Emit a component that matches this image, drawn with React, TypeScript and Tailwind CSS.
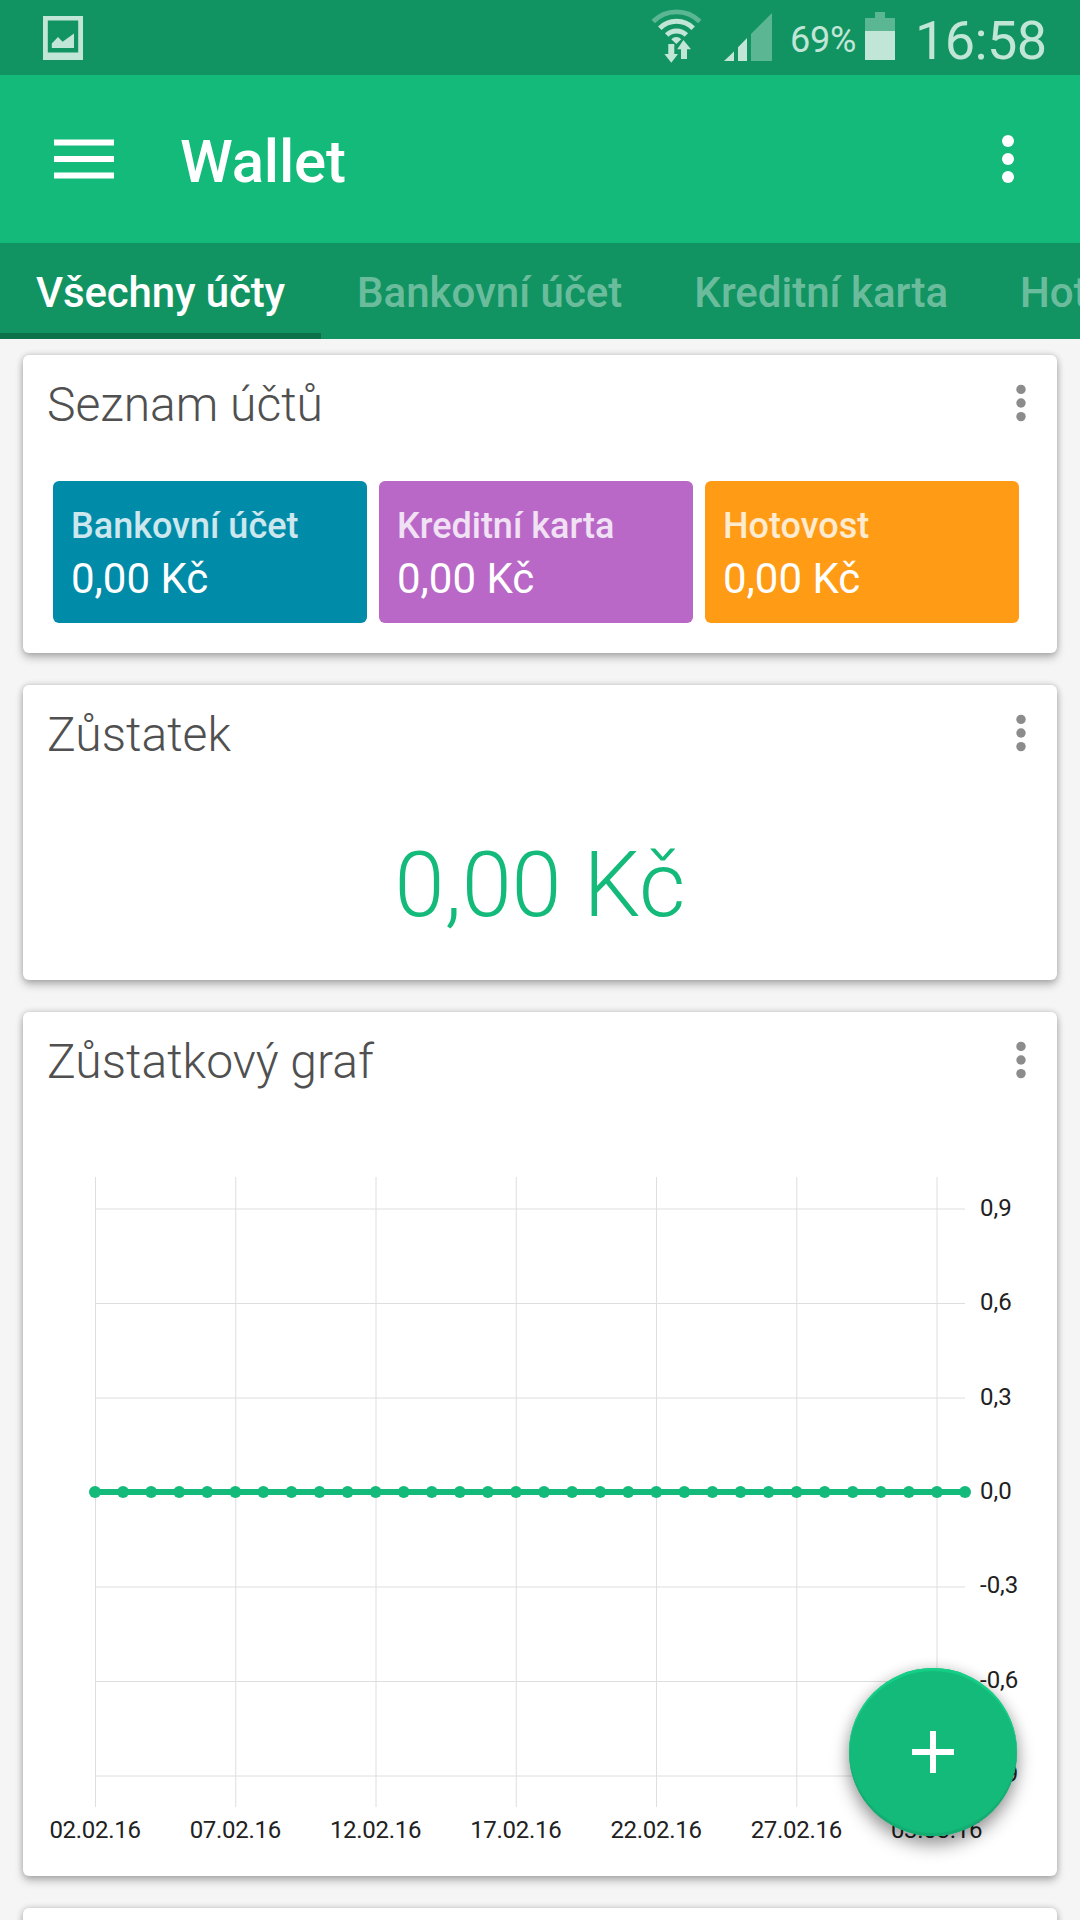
import type { ReactNode } from 'react';

const tabs = ['Všechny účty', 'Bankovní účet', 'Kreditní karta', 'Hotovost'];

const accounts = [
  { name: 'Bankovní účet', amount: '0,00 Kč', color: 'bg-[#008ba9]' },
  { name: 'Kreditní karta', amount: '0,00 Kč', color: 'bg-[#b968c7]' },
  { name: 'Hotovost', amount: '0,00 Kč', color: 'bg-[#ff9b14]' },
];

const dates = ['02.02.16', '07.02.16', '12.02.16', '17.02.16', '22.02.16', '27.02.16', '03.03.16'];
const levels = ['0,9', '0,6', '0,3', '0,0', '-0,3', '-0,6', '-0,9'];
const DAYS = 31;

const StatusBar = () => (
  <div className="flex h-[75px] items-start bg-[#119462] text-[#c1e5d7]">
    <svg className="ml-[43px] mt-4 h-11 w-10" viewBox="0 0 40 44" fill="currentColor">
      <path fillRule="evenodd" d="M0 0h40v44H0zM4.8 4.4v32h30.4v-32z" />
      <path d="M8.8 32v-4.6L15 21l4.6 4.8L31 17.6V32z" />
    </svg>

    {/* wifi */}
    <svg className="ml-[568px] mt-2 h-14 w-[51px]" viewBox="0 0 51 56" fill="none" stroke="currentColor">
      <path d="M2.2 13.5a33 33 0 0 1 46.6 0" strokeWidth="4.8" opacity="0.42" />
      <path d="M8.8 20.2a23.6 23.6 0 0 1 33.4 0" strokeWidth="5" />
      <path d="M15.7 27a14 14 0 0 1 19.6 0" strokeWidth="5" />
      <path d="M25.3 36l-5-4.8a7 7 0 0 1 10 0z" fill="currentColor" stroke="none" />
      <path d="M17.3 36h6v10H27l-6.7 8.8-6.9-8.8h3.9zM30 51V41.2h-3.8l6.2-9.2 7.6 9.2h-4V51z" fill="currentColor" stroke="none" />
    </svg>

    {/* mobile signal */}
    <svg className="ml-[22px] mt-[13px] h-12 w-12" viewBox="0 0 48 48" fill="currentColor">
      <path d="M0 48l10-9.5V48zM14 48V34.2l9-9.2v23z" />
      <path d="M27 48V21L48 0v48z" opacity="0.42" />
    </svg>

    <span className="ml-[18px] mt-[19px] w-[66px] whitespace-nowrap text-[36px] leading-[42px] tracking-[-0.2px]">69%</span>
    <svg className="ml-[9px] mt-3 h-12 w-[30px]" viewBox="0 0 30 48" fill="currentColor">
      <path d="M10 0h10v6h10v13H0V6h10z" opacity="0.42" />
      <path d="M0 19h30v29H0z" />
    </svg>
    <span className="ml-[20px] mt-[9px] whitespace-nowrap text-[54px] leading-[64px] tracking-[-0.6px]">16:58</span>
  </div>
);

const Toolbar = () => (
  <header className="flex h-[168px] items-center bg-[#14ba7a] text-white">
    <svg className="ml-[54px] h-10 w-15" viewBox="0 0 60 40" fill="currentColor">
      <path d="M0 .4h60v6H0zM0 17h60v6H0zM0 33.4h60v6H0z" />
    </svg>
    <h1 className="ml-[66px] flex-1 pt-[5px] text-[60px] font-medium leading-[72px] tracking-[-0.2px]">Wallet</h1>
    <svg className="mr-[66px] h-12 w-3" viewBox="0 0 12 48" fill="currentColor">
      <circle cx="6" cy="6" r="6" />
      <circle cx="6" cy="24" r="6" />
      <circle cx="6" cy="42" r="6" />
    </svg>
  </header>
);

const TabBar = () => (
  <nav className="flex h-24 overflow-hidden bg-[#119462]">
    {tabs.map((tab, i) => (
      <div
        key={tab}
        className={
          i === 0
            ? 'flex w-[321px] shrink-0 border-b-6 border-[#0c7049] px-9 pt-[9px] tracking-[-0.15px] text-white'
            : 'flex shrink-0 border-b-6 border-transparent px-9 pt-[9px] text-white/40'
        }
      >
        <span className="whitespace-nowrap text-[42px] font-medium leading-[81px]">{tab}</span>
      </div>
    ))}
  </nav>
);

const Card = ({ title, className = '', children }: { title?: string; className?: string; children?: ReactNode }) => (
  <section
    className={`shrink-0 rounded-md bg-white shadow-[0_5px_8px_rgba(0,0,0,0.24),0_0_6px_rgba(0,0,0,0.2)] ${className}`}
  >
    {title && (
      <div className="flex h-24 items-center justify-between pl-6 pr-[31px]">
        <h2 className="pt-[3px] text-[48px] font-light leading-[58px] text-[#505050]">{title}</h2>
        <svg className="h-[38px] w-[10px]" viewBox="0 0 10 38" fill="#8c8c8c">
          <circle cx="5" cy="5.4" r="4.7" />
          <circle cx="5" cy="19" r="4.7" />
          <circle cx="5" cy="32.6" r="4.7" />
        </svg>
      </div>
    )}
    {children}
  </section>
);

const BalanceChart = () => (
  <svg className="block h-[768px] w-[1034px] text-[24px]" viewBox="23 1108 1034 768" fill="#212121">
    <g stroke="#dedede" strokeWidth="1">
      {dates.map((d, i) => (
        <line key={d} x1={95.5 + i * 140.25} x2={95.5 + i * 140.25} y1="1177" y2="1807" />
      ))}
      {levels.map((l, i) => (
        <line key={l} x1="95" x2="965" y1={1209 + i * 94.5} y2={1209 + i * 94.5} />
      ))}
    </g>
    <g className="tracking-[-0.3px]">
      {dates.map((d, i) => (
        <text key={d} x={95 + i * 140.25} y="1838" textAnchor="middle">
          {d}
        </text>
      ))}
    </g>
    {levels.map((l, i) => (
      <text key={l} x="980" y={1216 + i * 94.35}>
        {l}
      </text>
    ))}
    <g fill="#14ba7a">
      <rect x="95" y="1489" width="870" height="6" />
      {Array.from({ length: DAYS + 1 }, (_, i) => (
        <circle key={i} cx={95 + (i * 870) / DAYS} cy="1492" r="6" />
      ))}
    </g>
  </svg>
);

const AddButton = () => (
  <button className="absolute bottom-[84px] right-[63px] flex h-[168px] w-[168px] items-center justify-center rounded-full bg-[#14ba7a] shadow-[0_9px_18px_rgba(0,0,0,0.38),0_0_14px_rgba(0,0,0,0.12),inset_0_3px_1px_#15cf87,inset_0_-3px_1px_#13ac71]">
    <svg className="h-[42px] w-[42px]" viewBox="0 0 42 42" fill="white">
      <path d="M18 0h6v18h18v6H24v18h-6V24H0v-6h18z" />
    </svg>
  </button>
);

export default function App() {
  return (
    <div className="relative flex h-[1920px] w-[1080px] flex-col overflow-hidden bg-[#f5f5f5] font-['Roboto',sans-serif]">
      <StatusBar />
      <Toolbar />
      <TabBar />

      <main className="flex flex-1 flex-col gap-8 overflow-hidden px-[23px] pt-4">
        <Card title="Seznam účtů" className="h-[298px]">
          <div className="flex gap-3 pl-[30px] pt-[30px]">
            {accounts.map(({ name, amount, color }) => (
              <div key={name} className={`h-[142px] w-[314px] rounded-md px-[18px] pt-[18px] text-white ${color}`}>
                <p className="text-[36px] font-medium leading-[54px] text-white/80">{name}</p>
                <p className="text-[42px] leading-[52px]">{amount}</p>
              </div>
            ))}
          </div>
        </Card>

        <Card title="Zůstatek" className="h-[295px]">
          <div className="flex h-[199px] items-center justify-center pt-[11px]">
            <span className="text-[90px] font-light leading-[108px] text-[#14ba7a]">0,00 Kč</span>
          </div>
        </Card>

        <Card title="Zůstatkový graf" className="h-[864px]">
          <BalanceChart />
        </Card>

        <Card className="h-[200px]" />
      </main>

      <AddButton />
    </div>
  );
}
